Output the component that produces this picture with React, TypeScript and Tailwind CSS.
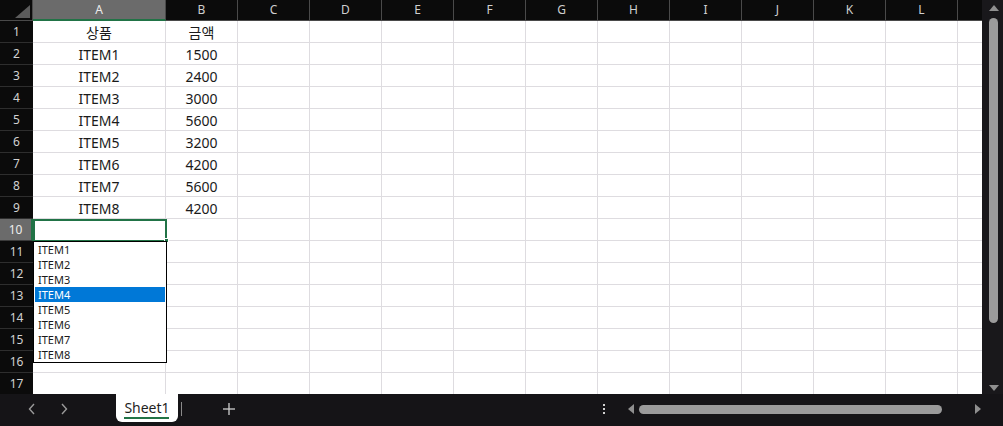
import React from "react"

const columns = [
  { name: "A", width: 133 },
  { name: "B", width: 72 },
  { name: "C", width: 72 },
  { name: "D", width: 72 },
  { name: "E", width: 72 },
  { name: "F", width: 72 },
  { name: "G", width: 72 },
  { name: "H", width: 72 },
  { name: "I", width: 72 },
  { name: "J", width: 72 },
  { name: "K", width: 72 },
  { name: "L", width: 72 },
  { name: "", width: 72 },
]

const data: Record<number, [string, string]> = {
  1: ["상품", "금액"],
  2: ["ITEM1", "1500"],
  3: ["ITEM2", "2400"],
  4: ["ITEM3", "3000"],
  5: ["ITEM4", "5600"],
  6: ["ITEM5", "3200"],
  7: ["ITEM6", "4200"],
  8: ["ITEM7", "5600"],
  9: ["ITEM8", "4200"],
}

const items = ["ITEM1", "ITEM2", "ITEM3", "ITEM4", "ITEM5", "ITEM6", "ITEM7", "ITEM8"]
const rows = Array.from({ length: 17 }, (_, i) => i + 1)

function Triangle({ dir, className }: { dir: "up" | "down" | "left" | "right"; className?: string }) {
  const points = {
    up: "0,6 5,0 10,6",
    down: "0,0 10,0 5,6",
    left: "6,0 6,10 0,5",
    right: "0,0 6,5 0,10",
  }[dir]
  const vertical = dir === "up" || dir === "down"
  return (
    <svg width={vertical ? 10 : 6} height={vertical ? 6 : 10} className={className}>
      <polygon points={points} fill="#8f8f8f" />
    </svg>
  )
}

export default function App() {
  return (
    <div
      className="w-[1003px] h-[426px] bg-[#151417] flex flex-col overflow-hidden"
      style={{ fontFamily: '"Noto Sans", "Noto Sans CJK KR", sans-serif' }}
    >
      <div className="flex h-[394px]">
        <div className="relative flex-1 overflow-hidden bg-white">
          {/* column headers */}
          <div className="flex h-[21px] bg-[#0b0b0b]">
            <div className="w-[33px] shrink-0 h-full border-r border-b border-[#4a4a4a] flex items-end justify-end pr-[2px] pb-[2px]">
              <svg width="15" height="13">
                <polygon points="15,0 15,13 0,13" fill="#5c5c5c" />
              </svg>
            </div>
            {columns.map((c, i) => (
              <div
                key={i}
                style={{ width: c.width }}
                className={
                  c.name === "A"
                    ? "shrink-0 h-full bg-[#6b6b6b] border-r border-[#4a4a4a] border-b-2 border-b-[#217346] text-[12px] text-[#ececec] flex items-center justify-center"
                    : "shrink-0 h-full border-r border-b border-[#4a4a4a] text-[12px] text-[#cfcfcf] flex items-center justify-center"
                }
              >
                {c.name}
              </div>
            ))}
          </div>

          {rows.map((r) => (
            <div key={r} className="flex h-[22px]">
              <div
                className={
                  r === 10
                    ? "w-[33px] shrink-0 h-full bg-[#6b6b6b] border-r-2 border-[#217346] border-b border-b-[#3a3a3a] text-[12px] text-[#ededed] flex items-center justify-center"
                    : "w-[33px] shrink-0 h-full bg-[#0b0b0b] border-b border-[#2e2e2e] text-[12px] text-[#d2d2d2] flex items-center justify-center"
                }
              >
                {r}
              </div>
              {columns.map((c, ci) => (
                <div
                  key={ci}
                  style={{ width: c.width }}
                  className="shrink-0 h-full border-r border-b border-[#dedce0] text-[14px] text-[#1a1a1a] flex items-center justify-center pt-[1px]"
                >
                  {ci < 2 && data[r] ? data[r][ci] : ""}
                </div>
              ))}
            </div>
          ))}

          {/* active cell A10 */}
          <div className="absolute left-[33px] top-[219px] w-[134px] h-[23px] border-2 border-[#217346]" />
          <div className="absolute left-[164px] top-[238px] w-[5px] h-[5px] bg-[#217346] border border-white" />

          {/* validation dropdown */}
          <div className="absolute left-[33px] top-[241px] w-[134px] h-[122px] bg-white border border-black">
            {items.map((it) => (
              <div
                key={it}
                className={
                  it === "ITEM4"
                    ? "h-[15px] mx-[1px] bg-[#0078d7] text-white text-[11px] leading-[15px] pl-[3px]"
                    : "h-[15px] mx-[1px] text-[#1a1a1a] text-[11px] leading-[15px] pl-[3px]"
                }
              >
                {it}
              </div>
            ))}
          </div>
        </div>

        {/* vertical scrollbar */}
        <div className="w-[21px] shrink-0 bg-[#19181b] flex flex-col items-center pt-[5px]">
          <Triangle dir="up" className="ml-[2px]" />
          <div className="w-[9px] h-[305px] mt-[7px] ml-[2px] rounded-full bg-[#9b9b9b]" />
          <div className="flex-1" />
          <Triangle dir="down" className="ml-[2px] mb-[3px]" />
        </div>
      </div>

      {/* sheet tab bar */}
      <div className="h-[32px] flex items-center">
        <div className="w-[116px] h-full flex items-center pl-[28px] gap-[24px] pb-[2px]">
          <svg width="8" height="12" viewBox="0 0 8 12">
            <polyline points="6,1 1.5,6 6,11" fill="none" stroke="#9a9a9a" strokeWidth="1.4" />
          </svg>
          <svg width="8" height="12" viewBox="0 0 8 12">
            <polyline points="2,1 6.5,6 2,11" fill="none" stroke="#9a9a9a" strokeWidth="1.4" />
          </svg>
        </div>
        <div className="relative self-start w-[62px] h-[28px] bg-white rounded-b-[6px] flex items-center justify-center pb-[2px] text-[14px] text-[#1f1f1f]">
          Sheet1
          <div className="absolute left-[8px] bottom-[3px] w-[45px] h-[2px] bg-[#217346]" />
        </div>
        <div className="ml-[3px] w-px h-[14px] bg-[#8a8a8a] mb-[2px]" />
        <svg width="12" height="12" className="ml-[41px] mb-[2px]">
          <line x1="6" y1="0" x2="6" y2="12" stroke="#d0d0d0" strokeWidth="1.3" />
          <line x1="0" y1="6" x2="12" y2="6" stroke="#d0d0d0" strokeWidth="1.3" />
        </svg>
        <div className="ml-[368px] w-[3px] flex flex-col gap-[2px] mb-[2px]">
          <div className="w-[2px] h-[2px] bg-[#d0d0d0]" />
          <div className="w-[2px] h-[2px] bg-[#d0d0d0]" />
          <div className="w-[2px] h-[2px] bg-[#d0d0d0]" />
        </div>
        <Triangle dir="left" className="ml-[22px] mb-[2px]" />
        <div className="ml-[5px] w-[303px] h-[9px] rounded-full bg-[#9b9b9b] mb-[2px]" />
        <Triangle dir="right" className="ml-[33px] mb-[2px]" />
      </div>
    </div>
  )
}
